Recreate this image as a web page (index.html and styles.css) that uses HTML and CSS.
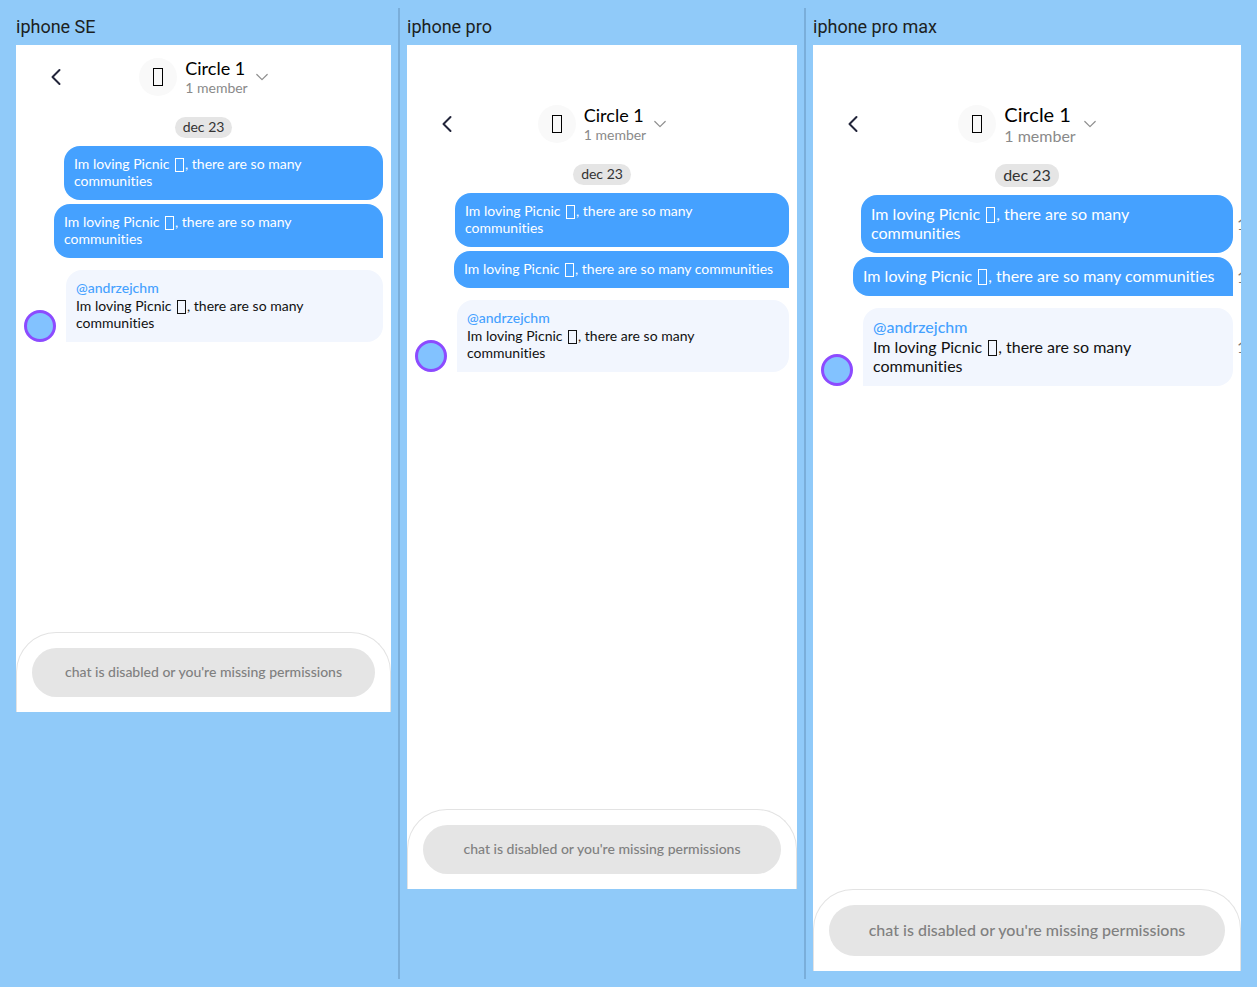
FILE: index.html
```
<!DOCTYPE html>
<html lang="en">
<head>
<meta charset="utf-8">
<title>Circle chat – devices</title>
<meta name="viewport" content="width=device-width, initial-scale=1">
<link rel="stylesheet" href="styles.css">
</head>
<body>
<main class="board">
  <section class="device">
    <h2 class="device-name">iphone SE</h2>
    <div class="phone phone-se">
      <header class="topbar">
        <button class="back" type="button" aria-label="Back"><svg width="12" height="18" viewBox="0 0 12 18"><path d="M9.5 2 2.500 9l7 7"/></svg></button>
        <button class="circle" type="button">
          <span class="circle-icon"><i class="box-large"></i></span>
          <span class="circle-text"><span class="circle-name">Circle 1</span><span class="members">1 member</span></span>
          <svg class="chevron" width="12" height="8" viewBox="0 0 12 8"><path d="m.8 1.500 5.200 5.200 5.200-5.200"/></svg>
        </button>
      </header>
      <div class="chat">
        <time class="date">dec 23</time>
        <div class="row"><p class="bubble mine">Im loving Picnic <i class="box"></i>, there are so many<br>communities</p></div>
        <div class="row"><p class="bubble mine last">Im loving Picnic <i class="box"></i>, there are so many<br>communities</p></div>
        <div class="row other"><span class="avatar"></span><div class="bubble theirs"><a class="user" href="#">@andrzejchm</a><p class="text">Im loving Picnic <i class="box"></i>, there are so many<br>communities</p></div></div>
      </div>
      <footer class="composer"><p class="notice">chat is disabled or you're missing permissions</p></footer>
    </div>
  </section>
  <div class="divider"></div>
  <section class="device">
    <h2 class="device-name">iphone pro</h2>
    <div class="phone phone-pro">
      <header class="topbar">
        <button class="back" type="button" aria-label="Back"><svg width="12" height="18" viewBox="0 0 12 18"><path d="M9.5 2 2.500 9l7 7"/></svg></button>
        <button class="circle" type="button">
          <span class="circle-icon"><i class="box-large"></i></span>
          <span class="circle-text"><span class="circle-name">Circle 1</span><span class="members">1 member</span></span>
          <svg class="chevron" width="12" height="8" viewBox="0 0 12 8"><path d="m.8 1.500 5.200 5.200 5.200-5.200"/></svg>
        </button>
      </header>
      <div class="chat">
        <time class="date">dec 23</time>
        <div class="row"><p class="bubble mine">Im loving Picnic <i class="box"></i>, there are so many<br>communities</p></div>
        <div class="row"><p class="bubble mine last">Im loving Picnic <i class="box"></i>, there are so many communities</p></div>
        <div class="row other"><span class="avatar"></span><div class="bubble theirs"><a class="user" href="#">@andrzejchm</a><p class="text">Im loving Picnic <i class="box"></i>, there are so many<br>communities</p></div></div>
      </div>
      <footer class="composer"><p class="notice">chat is disabled or you're missing permissions</p></footer>
    </div>
  </section>
  <div class="divider"></div>
  <section class="device">
    <h2 class="device-name">iphone pro max</h2>
    <div class="phone phone-max">
      <header class="topbar">
        <button class="back" type="button" aria-label="Back"><svg width="12" height="18" viewBox="0 0 12 18"><path d="M9.5 2 2.500 9l7 7"/></svg></button>
        <button class="circle" type="button">
          <span class="circle-icon"><i class="box-large"></i></span>
          <span class="circle-text"><span class="circle-name">Circle 1</span><span class="members">1 member</span></span>
          <svg class="chevron" width="12" height="8" viewBox="0 0 12 8"><path d="m.8 1.500 5.200 5.200 5.200-5.200"/></svg>
        </button>
      </header>
      <div class="chat">
        <time class="date">dec 23</time>
        <div class="row"><p class="bubble mine">Im loving Picnic <i class="box"></i>, there are so many<br>communities</p><span class="time">1</span></div>
        <div class="row"><p class="bubble mine last">Im loving Picnic <i class="box"></i>, there are so many communities</p><span class="time">1</span></div>
        <div class="row other"><span class="avatar"></span><div class="bubble theirs"><a class="user" href="#">@andrzejchm</a><p class="text">Im loving Picnic <i class="box"></i>, there are so many<br>communities</p></div><span class="time">1</span></div>
      </div>
      <footer class="composer"><p class="notice">chat is disabled or you're missing permissions</p></footer>
    </div>
  </section>
</main>
</body>
</html>
```
FILE: styles.css
```
* { box-sizing: border-box; }
body {
  margin: 0;
  background: #90caf9;
  font-family: Lato, "Open Sans", sans-serif;
  font-variant-ligatures: none;
}
p, h2 { margin: 0; }
button { margin: 0; padding: 0; border: 0; background: none; font: inherit; color: inherit; cursor: pointer; }
svg { display: block; fill: none; stroke-linecap: round; stroke-linejoin: round; }

.board {
  display: grid;
  grid-template-columns: 375fr 2px 390fr 2px 428fr;
  column-gap: 7px;
  min-height: 100vh;
  padding: 8px 16px;
}
.divider { background: #7aaeda; }
.device { min-width: 0; padding: 8px 0; }
.device-name {
  margin-bottom: 8px;
  font: 400 18px/21px Roboto, sans-serif;
  color: #1c1f22;
}

.phone {
  --text: 14px;
  --line: 17px;
  --title: 18px;
  --title-line: 22px;
  --box-w: 9px;
  --box-h: 14px;
  --last-indent: 30px;
  display: flex;
  flex-direction: column;
  overflow: hidden;
  background: #fff;
  font-size: var(--text);
  line-height: var(--line);
}
.phone-se { aspect-ratio: 375 / 667; }
.phone-pro { --last-indent: 39px; aspect-ratio: 390 / 844; padding-top: 47px; }
.phone-max {
  --text: 16px;
  --line: 19px;
  --title: 20px;
  --title-line: 24px;
  --box-w: 9px;
  --box-h: 16px;
  --last-indent: 32px;
  aspect-ratio: 428 / 926;
  padding-top: 47px;
}

.topbar {
  display: grid;
  grid-template-columns: 1fr auto 1fr;
  align-items: center;
  height: 64px;
  padding: 0 16px;
}
.back { display: grid; place-items: center; width: 48px; height: 48px; }
.back path { stroke: #22253a; stroke-width: 2; }
.circle { display: flex; align-items: center; gap: 8px; text-align: left; }
.circle-icon {
  display: grid;
  place-items: center;
  width: 38px;
  height: 38px;
  border-radius: 50%;
  background: #f9f9f9;
}
.circle-text { display: flex; flex-direction: column; padding-bottom: 2px; }
.circle-name { font-size: var(--title); line-height: var(--title-line); color: #000; }
.members { color: #8a8a8a; }
.chevron { overflow: visible; }
.chevron path { stroke: #8f8f8f; stroke-width: 1.2; }

.box {
  display: inline-block;
  width: var(--box-w);
  height: var(--box-h);
  margin: -2px 1px 0 2px;
  border: 1px solid currentColor;
  vertical-align: -3px;
}
.box-large { width: 10px; height: 18px; border: 1px solid #000; }

.chat { flex: 1; display: flex; flex-direction: column; padding: 8px; }
.date {
  align-self: center;
  margin-bottom: 8px;
  padding: 1px 8px 3px;
  border-radius: 12px;
  background: #e5e5e5;
  color: #333;
}
.row { position: relative; display: flex; justify-content: flex-end; margin-bottom: 4px; }
.bubble { flex: 1; padding: 9px 10px 11px; border-radius: 16px; }
.mine { margin-left: 40px; background: #45a1ff; color: #fff; }
.last { margin-left: var(--last-indent); border-bottom-right-radius: 0; }
.other { align-items: flex-end; gap: 10px; margin-top: 8px; }
.avatar {
  width: 32px;
  height: 32px;
  border: 3px solid #8c4bff;
  border-radius: 50%;
  background: #82c2ff;
}
.theirs { border-bottom-left-radius: 0; background: #f2f6fe; color: #111; }
.user { display: block; margin-bottom: 1px; color: #45a1ff; text-decoration: none; font-weight: 500; }
.time { position: absolute; left: 100%; top: 50%; margin: -10px 0 0 4px; color: #777; }

.composer {
  padding: 15px;
  border: 1px solid #e3e3e3;
  border-bottom: 0;
  border-radius: 40px 40px 0 0;
}
.notice {
  padding: 15px 16px 17px;
  border-radius: 26px;
  background: #e5e5e5;
  color: #808080;
  text-align: center;
  font-weight: 500;
}
```
